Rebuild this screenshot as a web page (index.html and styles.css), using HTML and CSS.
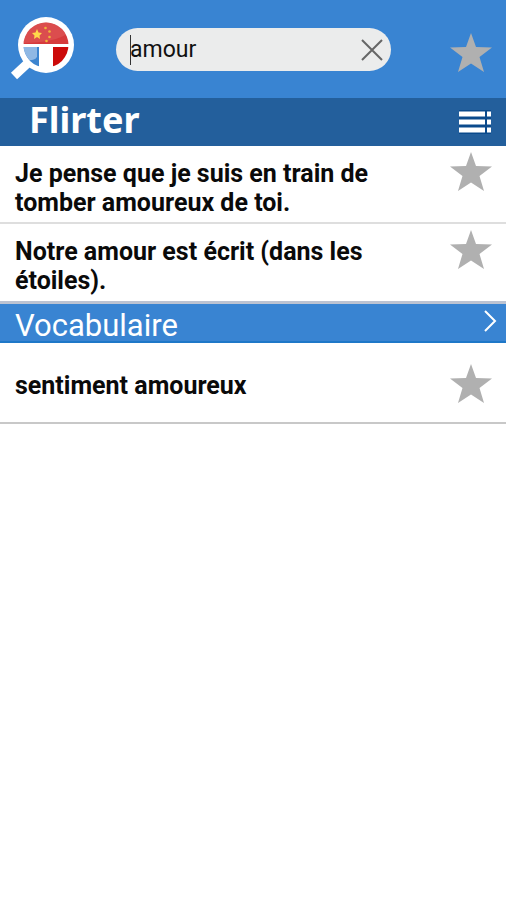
FILE: index.html
```html
<!DOCTYPE html>
<html lang="fr">
<head>
    <meta charset="UTF-8">
    <meta name="viewport" content="width=device-width, initial-scale=1.0">
    <title>Flirter</title>
    <link rel="stylesheet" href="styles.css">
</head>
<body>

<svg class="defs" aria-hidden="true">
    <symbol id="star" viewBox="0 0 42 40">
        <path d="M21 0 L26 14 L42 14.500 L29.500 24 L34 39 L21 30.500 L8 39 L12.500 24 L0 14.500 L16 14 Z"/>
    </symbol>
</svg>

<header class="header">
    <svg class="logo" viewBox="0 0 66 66" aria-label="Logo">
        <defs>
            <clipPath id="lens"><circle cx="36" cy="29" r="22.500"/></clipPath>
        </defs>
        <path d="M19 46 L4 60" stroke="#fff" stroke-width="9"/>
        <circle cx="36" cy="29" r="28" fill="#fff"/>
        <g clip-path="url(#lens)">
            <rect x="12" y="5" width="48" height="23" fill="#d63a3c"/>
            <path d="M12 5 H60 V16 Q46 27 12 27 Z" fill="#e0605f" opacity="0.500"/>
            <rect x="12" y="31" width="17" height="23" fill="#3c84cf"/>
            <path d="M12 31 H27 V41 Q24 45 17 44 Z" fill="#8fb8e4"/>
            <rect x="43" y="31" width="17" height="23" fill="#cc0a0a"/>
        </g>
        <path d="M27 13 L28.500 16.500 L32 17 L29.500 19.500 L30 23 L27 21 L24 23 L24.500 19.500 L22 17 L25.500 16.500 Z" fill="#ffd84a"/>
        <g fill="#f0b43c">
            <circle cx="35.500" cy="12" r="1.300"/>
            <circle cx="39.500" cy="15.500" r="1.300"/>
            <circle cx="39.500" cy="21" r="1.300"/>
            <circle cx="36.500" cy="25" r="1.300"/>
        </g>
    </svg>

    <form class="search" id="searchForm">
        <input class="search-input" type="text" id="search" value="amour" aria-label="Rechercher" autocomplete="off">
        <button class="icon-btn" type="reset" aria-label="Effacer">
            <svg class="cross" viewBox="0 0 22 22"><path d="M1 1 L21 21 M21 1 L1 21"/></svg>
        </button>
    </form>

    <button class="icon-btn" type="button" aria-label="Favoris">
        <svg class="star"><use href="#star"/></svg>
    </button>
</header>

<div class="title-bar">
    <h1 class="title">Flirter</h1>
    <button class="icon-btn" type="button" aria-label="Menu">
        <svg class="menu" viewBox="0 0 34 26">
            <path d="M1 5 H33 M1 13 H33 M1 21 H33" stroke="#0a4a8c" stroke-width="8"/>
            <path d="M1 5 H27 M1 13 H27 M1 21 H27 M29 5 H33 M29 13 H33 M29 21 H33" stroke="#fff" stroke-width="5"/>
        </svg>
    </button>
</div>

<main>
    <div class="row">
        <p class="phrase">Je pense que je suis en train de tomber amoureux de toi.</p>
        <button class="icon-btn" type="button" aria-label="Ajouter aux favoris">
            <svg class="star"><use href="#star"/></svg>
        </button>
    </div>
    <div class="row row-last">
        <p class="phrase">Notre amour est écrit (dans les étoiles).</p>
        <button class="icon-btn" type="button" aria-label="Ajouter aux favoris">
            <svg class="star"><use href="#star"/></svg>
        </button>
    </div>

    <a class="section" href="#vocabulaire">
        <span>Vocabulaire</span>
        <svg class="chevron" viewBox="0 0 14 22"><path d="M2 1 L12 11 L2 21"/></svg>
    </a>

    <div class="row row-word" id="vocabulaire">
        <p class="phrase">sentiment amoureux</p>
        <button class="icon-btn" type="button" aria-label="Ajouter aux favoris">
            <svg class="star"><use href="#star"/></svg>
        </button>
    </div>
</main>

</body>
</html>
```

FILE: styles.css
```css
* {
    box-sizing: border-box;
}
body {
    margin: 0;
    font-family: Roboto, sans-serif;
    background-color: #fff;
    color: #0a0a0a;
}
.defs {
    display: none;
}
.icon-btn {
    display: block;
    flex: none;
    padding: 0;
    border: 0;
    background: none;
    cursor: pointer;
}
.icon-btn svg {
    display: block;
}
.star {
    width: 42px;
    height: 40px;
    fill: #b0b0b0;
}

/* header */
.header {
    display: flex;
    align-items: flex-start;
    height: 98px;
    padding: 16px 14px 0 10px;
    background-color: #3984d2;
}
.logo {
    flex: none;
    width: 66px;
    height: 66px;
}
.search {
    position: relative;
    display: flex;
    flex: 1;
    align-items: center;
    min-width: 0;
    height: 43px;
    margin: 12px 59px 0 40px;
    padding: 0 8px 0 14px;
    border-radius: 22px;
    background-color: #ebecec;
}
/* text cursor */
.search::before {
    content: "";
    position: absolute;
    left: 14px;
    top: 7px;
    width: 1px;
    height: 30px;
    background-color: #333;
}
.search-input {
    flex: 1;
    min-width: 0;
    padding: 0;
    border: 0;
    outline: none;
    background: none;
    font-family: Roboto, sans-serif;
    font-size: 23px;
    color: #111;
}
.cross {
    width: 22px;
    height: 22px;
    fill: none;
    stroke: #666;
    stroke-width: 2;
}
.header > .icon-btn {
    margin-top: 17px;
}

/* title */
.title-bar {
    display: flex;
    align-items: center;
    justify-content: space-between;
    height: 48px;
    padding: 0 14px 0 29px;
    background-color: #235f9c;
}
.title {
    margin: 0;
    padding-bottom: 4px;
    font-family: "Noto Sans", sans-serif;
    font-size: 36px;
    line-height: 42px;
    color: #fff;
}
.menu {
    width: 34px;
    height: 26px;
}

/* list */
.row {
    display: flex;
    align-items: flex-start;
    justify-content: space-between;
    min-height: 78px;
    padding: 6px 14px 0 15px;
    border-bottom: 2px solid #dedede;
}
.row-last {
    min-height: 80px;
    border-bottom: 3px solid #bcc3d2;
}
.row-word {
    align-items: center;
    min-height: 81px;
    padding: 2px 14px 0 15px;
    border-bottom-color: #c8c8c8;
}
.phrase {
    max-width: 380px;
    margin: 0;
    padding-top: 7px;
    font-size: 25px;
    font-weight: bold;
    line-height: 29px;
}
.row-word .phrase {
    padding-top: 4px;
}
.section {
    display: flex;
    align-items: center;
    justify-content: space-between;
    height: 39px;
    padding: 0 9px 0 15px;
    border-bottom: 2px solid #1f78c8;
    background-color: #3984d2;
    font-size: 31px;
    line-height: 37px;
    color: #fff;
    text-decoration: none;
}
.section span {
    padding-top: 6px;
}
.chevron {
    width: 14px;
    height: 22px;
    margin-bottom: 3px;
    fill: none;
    stroke: #fff;
    stroke-width: 2;
}
```
